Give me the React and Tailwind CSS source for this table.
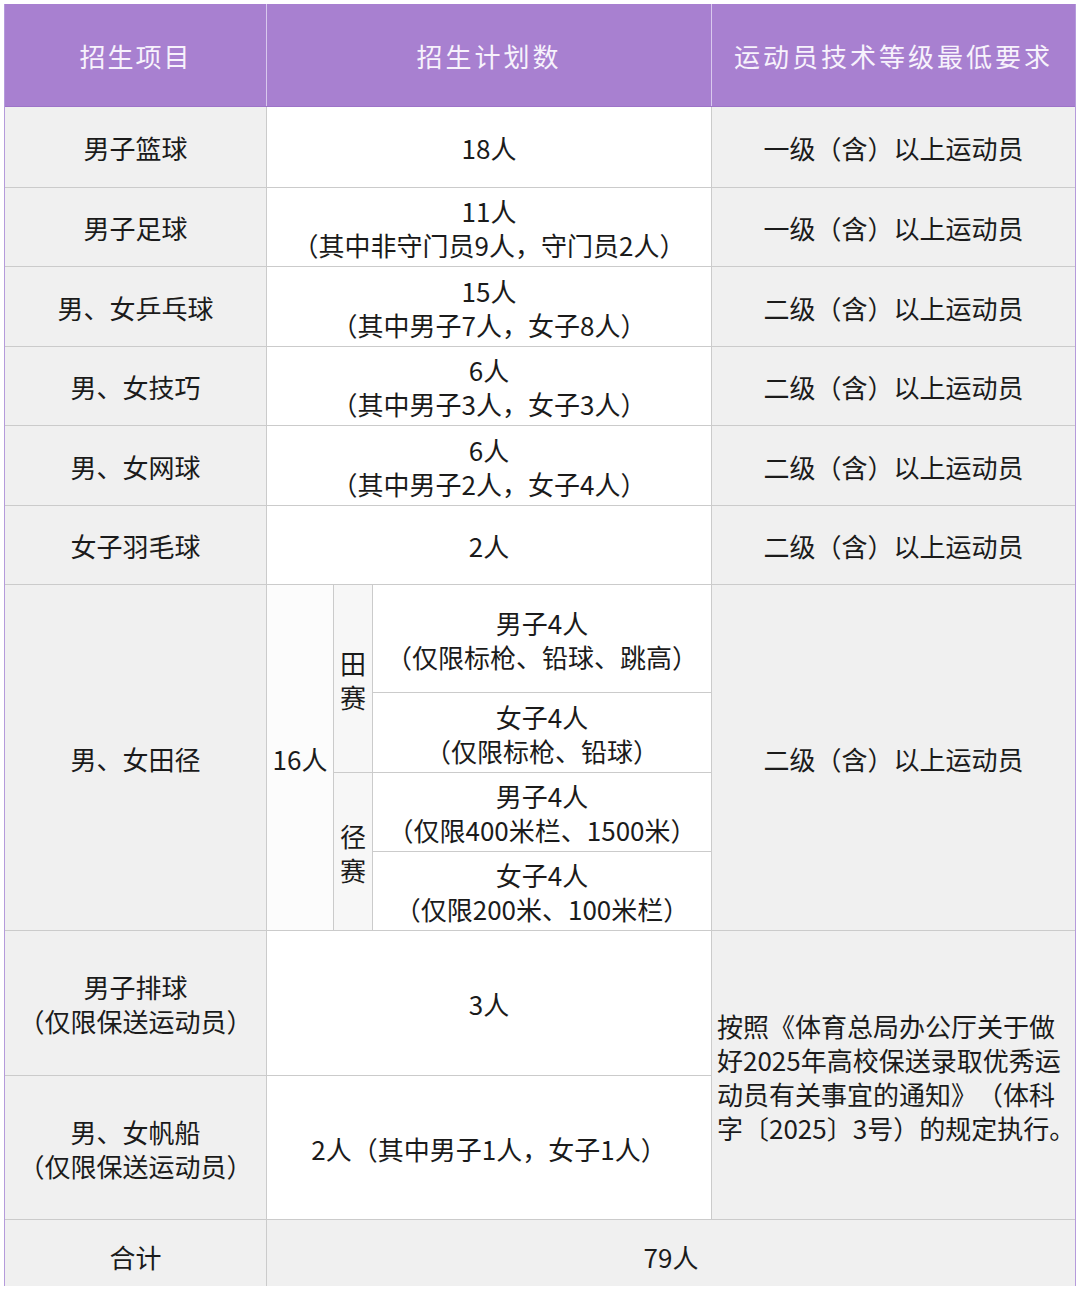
import React from "react";

const font = { fontFamily: '"Noto Sans CJK SC", "Noto Sans", sans-serif' };

function Cell({ className = "", children }) {
  return <div className={`flex flex-col items-center justify-center pt-[2px] text-center ${className}`}>{children}</div>;
}

const simpleRows = [
  { name: "男子篮球", count: ["18人"], req: "一级（含）以上运动员" },
  { name: "男子足球", count: ["11人", "（其中非守门员9人，守门员2人）"], req: "一级（含）以上运动员" },
  { name: "男、女乒乓球", count: ["15人", "（其中男子7人，女子8人）"], req: "二级（含）以上运动员" },
  { name: "男、女技巧", count: ["6人", "（其中男子3人，女子3人）"], req: "二级（含）以上运动员" },
  { name: "男、女网球", count: ["6人", "（其中男子2人，女子4人）"], req: "二级（含）以上运动员" },
  { name: "女子羽毛球", count: ["2人"], req: "二级（含）以上运动员" },
];

const rowStart = ["row-start-1", "row-start-2", "row-start-3", "row-start-4", "row-start-5", "row-start-6"];

const athletics = [
  ["男子4人", "（仅限标枪、铅球、跳高）", "row-start-7"],
  ["女子4人", "（仅限标枪、铅球）", "row-start-8"],
  ["男子4人", "（仅限400米栏、1500米）", "row-start-9"],
  ["女子4人", "（仅限200米、100米栏）", "row-start-10"],
];

export default function App() {
  return (
    <div className="min-h-[1290px] bg-white pl-[4px] pt-[4px] [text-spacing-trim:space-all]" style={font}>
      <div className="w-[1072px] border-x border-[#b59bdb] text-[26px] leading-[34px] text-[#1b1b1b]">
        {/* header */}
        <div className="grid h-[103px] grid-cols-[261px_444px_363px] gap-px border-b border-[#9d74c8] bg-[#d9c9ee]">
          <Cell className="bg-[#a880d0] tracking-[2px] text-[#f7f2fc]">招生项目</Cell>
          <Cell className="bg-[#a880d0] tracking-[3px] text-[#f7f2fc]">招生计划数</Cell>
          <Cell className="bg-[#a880d0] tracking-[3px] text-[#f7f2fc]">运动员技术等级最低要求</Cell>
        </div>

        {/* body */}
        <div className="grid grid-cols-[261px_66px_38px_338px_363px] grid-rows-[80px_78px_79px_78px_79px_78px_107px_79px_78px_78px_144px_143px_66px] gap-px bg-[#cbcbcb]">
          {simpleRows.map((r, i) => (
            <React.Fragment key={i}>
              <Cell className={`col-start-1 ${rowStart[i]} bg-[#f0f0f0]`}>{r.name}</Cell>
              <Cell className={`col-start-2 col-span-3 ${rowStart[i]} bg-white`}>
                {r.count.map((t) => (
                  <span key={t}>{t}</span>
                ))}
              </Cell>
              <Cell className={`col-start-5 ${rowStart[i]} bg-[#f0f0f0]`}>{r.req}</Cell>
            </React.Fragment>
          ))}

          {/* athletics */}
          <Cell className="col-start-1 row-start-7 row-span-4 bg-[#f0f0f0]">男、女田径</Cell>
          <Cell className="col-start-2 row-start-7 row-span-4 bg-[#fcfcfc]">16人</Cell>
          <Cell className="col-start-3 row-start-7 row-span-2 bg-[#f7f7f7]">
            <span>田</span>
            <span>赛</span>
          </Cell>
          <Cell className="col-start-3 row-start-9 row-span-2 bg-[#f7f7f7]">
            <span>径</span>
            <span>赛</span>
          </Cell>
          {athletics.map(([a, b, rs], i) => (
            <Cell key={i} className={`col-start-4 ${rs} bg-white`}>
              <span>{a}</span>
              <span>{b}</span>
            </Cell>
          ))}
          <Cell className="col-start-5 row-start-7 row-span-4 bg-[#f0f0f0]">二级（含）以上运动员</Cell>

          {/* volleyball / sailing */}
          <Cell className="col-start-1 row-start-11 bg-[#f0f0f0]">
            <span>男子排球</span>
            <span>（仅限保送运动员）</span>
          </Cell>
          <Cell className="col-start-2 col-span-3 row-start-11 bg-white">3人</Cell>
          <div className="col-start-5 row-start-11 row-span-2 flex flex-col justify-center whitespace-nowrap bg-[#f0f0f0] pl-[5px] pt-[4px] text-left">
            <span>按照《体育总局办公厅关于做</span>
            <span>好2025年高校保送录取优秀运</span>
            <span>动员有关事宜的通知》（体科</span>
            <span className="[text-spacing-trim:normal]">字〔2025〕3号）的规定执行。</span>
          </div>
          <Cell className="col-start-1 row-start-12 bg-[#f0f0f0]">
            <span>男、女帆船</span>
            <span>（仅限保送运动员）</span>
          </Cell>
          <Cell className="col-start-2 col-span-3 row-start-12 bg-white">2人（其中男子1人，女子1人）</Cell>

          {/* total */}
          <Cell className="col-start-1 row-start-13 bg-[#f0f0f0] pt-[8px]">合计</Cell>
          <Cell className="col-start-2 col-span-4 row-start-13 bg-[#f0f0f0] pt-[8px]">79人</Cell>
        </div>
      </div>
    </div>
  );
}
